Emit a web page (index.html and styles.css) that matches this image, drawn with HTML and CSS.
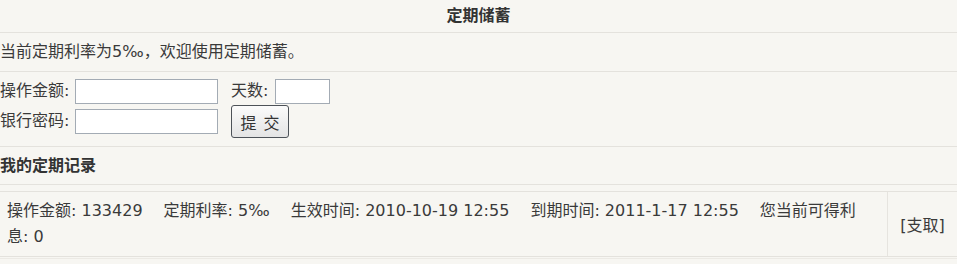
FILE: index.html
```html
<!DOCTYPE html>
<html lang="zh-CN">
<head>
<meta charset="utf-8">
<title>定期储蓄</title>
<link rel="stylesheet" href="styles.css">
</head>
<body>
<div class="page">
  <div class="row head">定期储蓄</div>
  <div class="row intro">当前定期利率为5‰，欢迎使用定期储蓄。</div>
  <form class="row form">
    <span class="lbl">操作金额:</span>
    <input class="inp wide" type="text">
    <span class="lbl">天数:</span>
    <input class="inp short" type="text">
    <span class="lbl">银行密码:</span>
    <input class="inp wide" type="password">
    <button class="btn" type="button">提 交</button>
  </form>
  <div class="row sub">我的定期记录</div>
  <div class="records">
    <div class="rec">
      <div class="info"><span class="f">操作金额: 133429</span><span class="f">定期利率: 5‰</span><span class="f">生效时间: 2010-10-19 12:55</span><span class="f">到期时间: 2011-1-17 12:55</span><span>您当前可得利息: 0</span></div>
      <div class="act">[支取]</div>
    </div>
  </div>
  <div class="tail"></div>
</div>
</body>
</html>
```
FILE: styles.css
```css
html, body {
  margin: 0;
  padding: 0;
  background: #f7f6f2;
}
body {
  font-family: "DejaVu Sans", "Noto Sans CJK SC", sans-serif;
  font-size: 16px;
  color: #3a3a3a;
}
.page {
  width: 957px;
}
.row {
  border-bottom: 1px solid #e4e2dd;
  box-sizing: border-box;
}
.head {
  height: 33px;
  line-height: 32px;
  text-align: center;
  font-weight: bold;
  color: #333;
}
.intro {
  height: 39px;
  line-height: 38px;
}
.form {
  margin: 0;
  height: 75px;
  padding: 7px 0 8px 0;
  display: grid;
  grid-template-columns: 75px 156px 44px 55px;
  grid-template-rows: 25px 33px;
  row-gap: 1px;
  align-items: center;
}
.lbl {
  white-space: nowrap;
  line-height: 22px;
  margin-top: -2px;
}
.inp {
  box-sizing: border-box;
  height: 25px;
  margin: 0;
  border: 1px solid #a3abb4;
  background: #fff;
  padding: 0 3px;
  font: inherit;
}
.wide { width: 143px; }
.short { width: 55px; }
.btn {
  grid-column: 3 / span 2;
  justify-self: start;
  box-sizing: border-box;
  width: 58px;
  height: 33px;
  margin: 0;
  padding: 0;
  border: 1px solid #4d5258;
  border-radius: 3px;
  background: linear-gradient(#fbfbfb, #e4e4e4);
  font: inherit;
  color: #333;
  word-spacing: 2px;
}
.sub {
  height: 38px;
  line-height: 37px;
  font-weight: bold;
  color: #333;
}
.records {
  margin-top: 6px;
  border-top: 1px solid #e4e2dd;
  border-bottom: 1px solid #e4e2dd;
}
.rec {
  display: flex;
  height: 64px;
}
.info {
  width: 888px;
  box-sizing: border-box;
  padding: 6px 24px 6px 7px;
  line-height: 26px;
  border-right: 1px solid #e6e4df;
}
.f {
  margin-right: 21px;
}
.act {
  flex: 1;
  display: flex;
  align-items: center;
  justify-content: center;
}
.tail {
  margin-top: 1px;
  border-top: 1px solid #eceae5;
}
```
